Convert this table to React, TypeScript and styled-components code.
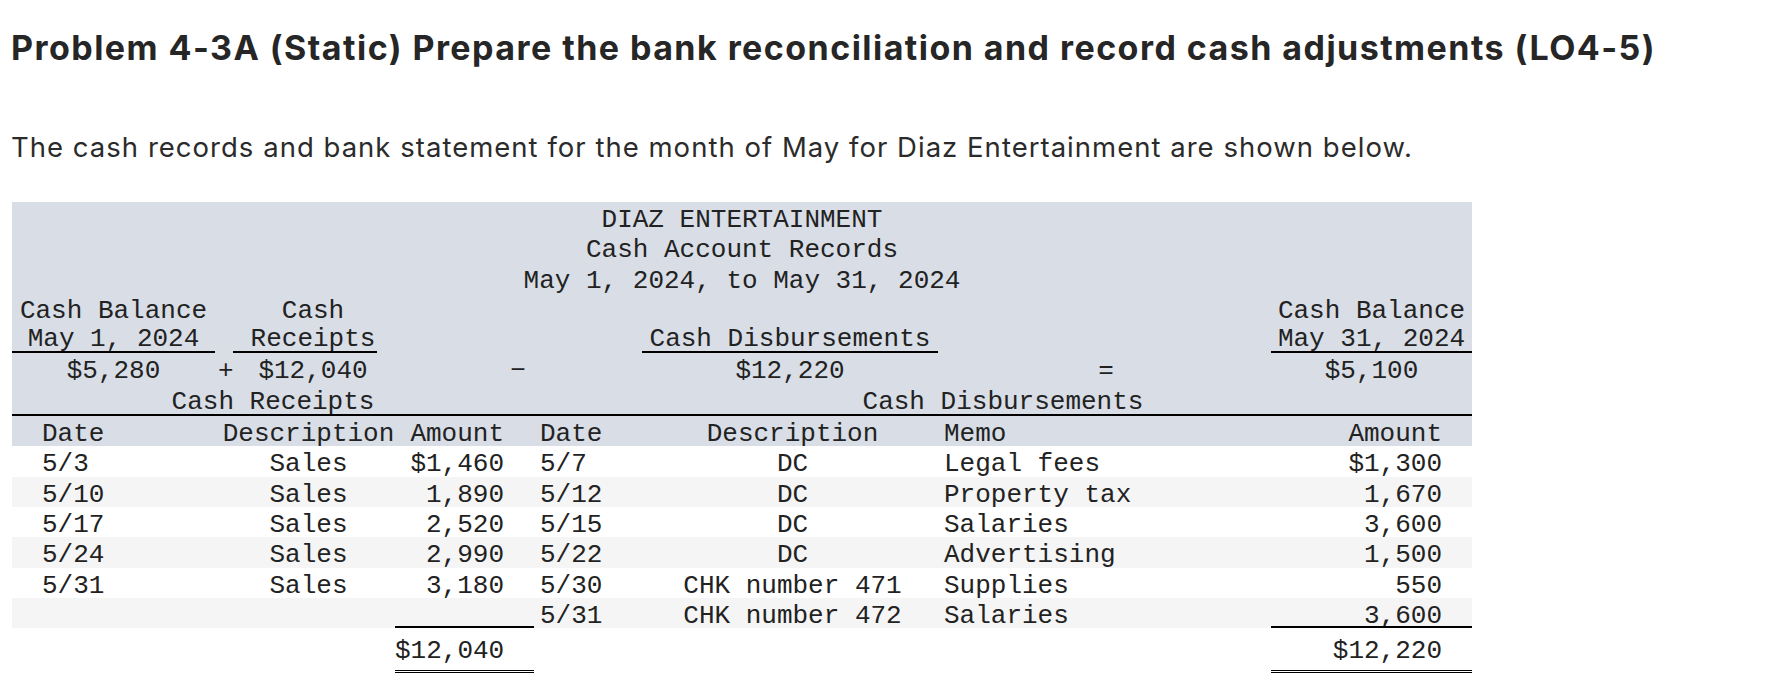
import React from "react";
import styled, { createGlobalStyle } from "styled-components";

const GlobalStyle = createGlobalStyle`
  html, body { margin: 0; padding: 0; background: #ffffff; }
  body { font-family: Inter, Lato, "Liberation Sans", sans-serif; color: #222; }
`;

const Page = styled.main`
  padding: 27px 0 24px 11px;
`;

const Title = styled.h1`
  margin: 0;
  font: 700 34px/42px Inter, Lato, "Liberation Sans", sans-serif;
  letter-spacing: 1.45px;
  color: #262626;
  white-space: nowrap;
`;

const Intro = styled.p`
  margin: 61px 0 0 0;
  font: 400 27.5px/34px Inter, Lato, "Liberation Sans", sans-serif;
  letter-spacing: 1.02px;
  color: #2b2b2b;
  white-space: nowrap;
`;

const Sheet = styled.section`
  width: 1460px;
  margin: 38px 0 0 1px;
  font-family: "Liberation Mono", "Courier New", monospace;
  font-size: 26px;
  line-height: 30.3px;
  color: #222;
`;

const HeadBlock = styled.div`
  background: #d8dde6;
`;

const BannerLine = styled.div`
  box-sizing: border-box;
  height: 30.3px;
  padding-top: 3px;
  text-align: center;
  white-space: pre;
`;

const SummaryGrid = styled.div`
  display: grid;
  grid-template-columns: 203px 18px 144px 265px 296px 333px 201px;
  grid-auto-rows: 30.3px;
`;

const SumCell = styled.div<{ $col: number; $row: number; $underline?: boolean; $shift?: number }>`
  grid-column: ${(p) => p.$col};
  grid-row: ${(p) => p.$row};
  box-sizing: border-box;
  padding-top: ${(p) => (p.$underline ? 0.5 : 3)}px;
  padding-left: ${(p) => p.$shift ?? 0}px;
  text-align: center;
  white-space: pre;
  border-bottom: ${(p) => (p.$underline ? "2px solid #000" : "none")};
`;

const GroupRow = styled.div`
  display: grid;
  grid-template-columns: 522px 938px;
  height: 30.3px;
  border-bottom: 2px solid #000;
`;

const GroupTitle = styled.div`
  padding-top: 3px;
  text-align: center;
  white-space: pre;
`;

const COLS = "210px 173px 139px 108px 301px 328px 201px";

const tones = {
  head: "transparent",
  plain: "#ffffff",
  stripe: "#f5f5f5",
};

const TableRow = styled.div<{ $tone: keyof typeof tones }>`
  display: grid;
  grid-template-columns: ${COLS};
  height: 30.3px;
  background: ${(p) => tones[p.$tone]};
`;

const Cell = styled.div<{ $align?: "left" | "center" | "right"; $pad?: number }>`
  box-sizing: border-box;
  padding-top: 3px;
  white-space: pre;
  text-align: ${(p) => p.$align ?? "left"};
  padding-left: ${(p) => (p.$align === "left" || !p.$align ? p.$pad ?? 0 : 0)}px;
  padding-right: ${(p) => (p.$align === "right" ? p.$pad ?? 0 : 0)}px;
`;

const TotalRow = styled.div`
  display: grid;
  grid-template-columns: ${COLS};
  margin-top: -2px;
`;

const TotalCell = styled.div<{ $col: number }>`
  grid-column: ${(p) => p.$col};
  box-sizing: border-box;
  text-align: right;
  padding: 8px 30px 4px 0;
  border-top: 2px solid #000;
  border-bottom: 3px double #000;
`;

type Row = { rd: string; rdesc: string; ramt: string; dd: string; ddesc: string; memo: string; damt: string };

const rows: Row[] = [
  { rd: "5/3", rdesc: "Sales", ramt: "$1,460", dd: "5/7", ddesc: "DC", memo: "Legal fees", damt: "$1,300" },
  { rd: "5/10", rdesc: "Sales", ramt: "1,890", dd: "5/12", ddesc: "DC", memo: "Property tax", damt: "1,670" },
  { rd: "5/17", rdesc: "Sales", ramt: "2,520", dd: "5/15", ddesc: "DC", memo: "Salaries", damt: "3,600" },
  { rd: "5/24", rdesc: "Sales", ramt: "2,990", dd: "5/22", ddesc: "DC", memo: "Advertising", damt: "1,500" },
  { rd: "5/31", rdesc: "Sales", ramt: "3,180", dd: "5/30", ddesc: "CHK number 471", memo: "Supplies", damt: "550" },
  { rd: "", rdesc: "", ramt: "", dd: "5/31", ddesc: "CHK number 472", memo: "Salaries", damt: "3,600" },
];

export default function App() {
  return (
    <>
      <GlobalStyle />
      <Page>
        <Title>Problem 4-3A (Static) Prepare the bank reconciliation and record cash adjustments (LO4-5)</Title>
        <Intro>The cash records and bank statement for the month of May for Diaz Entertainment are shown below.</Intro>
        <Sheet>
          <HeadBlock>
            <BannerLine>DIAZ ENTERTAINMENT</BannerLine>
            <BannerLine>Cash Account Records</BannerLine>
            <BannerLine>May 1, 2024, to May 31, 2024</BannerLine>
            <SummaryGrid>
              <SumCell $col={1} $row={1}>Cash Balance</SumCell>
              <SumCell $col={3} $row={1} $shift={16}>Cash</SumCell>
              <SumCell $col={7} $row={1}>Cash Balance</SumCell>

              <SumCell $col={1} $row={2} $underline>May 1, 2024</SumCell>
              <SumCell $col={3} $row={2} $underline $shift={16}>Receipts</SumCell>
              <SumCell $col={5} $row={2} $underline>Cash Disbursements</SumCell>
              <SumCell $col={7} $row={2} $underline>May 31, 2024</SumCell>

              <SumCell $col={1} $row={3}>$5,280</SumCell>
              <SumCell $col={2} $row={3} $shift={3}>+</SumCell>
              <SumCell $col={3} $row={3} $shift={16}>$12,040</SumCell>
              <SumCell $col={4} $row={3} $shift={17}>−</SumCell>
              <SumCell $col={5} $row={3}>$12,220</SumCell>
              <SumCell $col={6} $row={3} $shift={3}>=</SumCell>
              <SumCell $col={7} $row={3}>$5,100</SumCell>
            </SummaryGrid>
            <GroupRow>
              <GroupTitle>Cash Receipts</GroupTitle>
              <GroupTitle>Cash Disbursements</GroupTitle>
            </GroupRow>
            <TableRow $tone="head">
              <Cell $pad={30}>Date</Cell>
              <Cell $align="center">Description</Cell>
              <Cell $align="right" $pad={30}>Amount</Cell>
              <Cell $pad={6}>Date</Cell>
              <Cell $align="center">Description</Cell>
              <Cell $pad={1}>Memo</Cell>
              <Cell $align="right" $pad={30}>Amount</Cell>
            </TableRow>
          </HeadBlock>
          {rows.map((r, i) => (
            <TableRow key={i} $tone={i % 2 === 0 ? "plain" : "stripe"}>
              <Cell $pad={30}>{r.rd}</Cell>
              <Cell $align="center">{r.rdesc}</Cell>
              <Cell $align="right" $pad={30}>{r.ramt}</Cell>
              <Cell $pad={6}>{r.dd}</Cell>
              <Cell $align="center">{r.ddesc}</Cell>
              <Cell $pad={1}>{r.memo}</Cell>
              <Cell $align="right" $pad={30}>{r.damt}</Cell>
            </TableRow>
          ))}
          <TotalRow>
            <TotalCell $col={3}>$12,040</TotalCell>
            <TotalCell $col={7}>$12,220</TotalCell>
          </TotalRow>
        </Sheet>
      </Page>
    </>
  );
}
